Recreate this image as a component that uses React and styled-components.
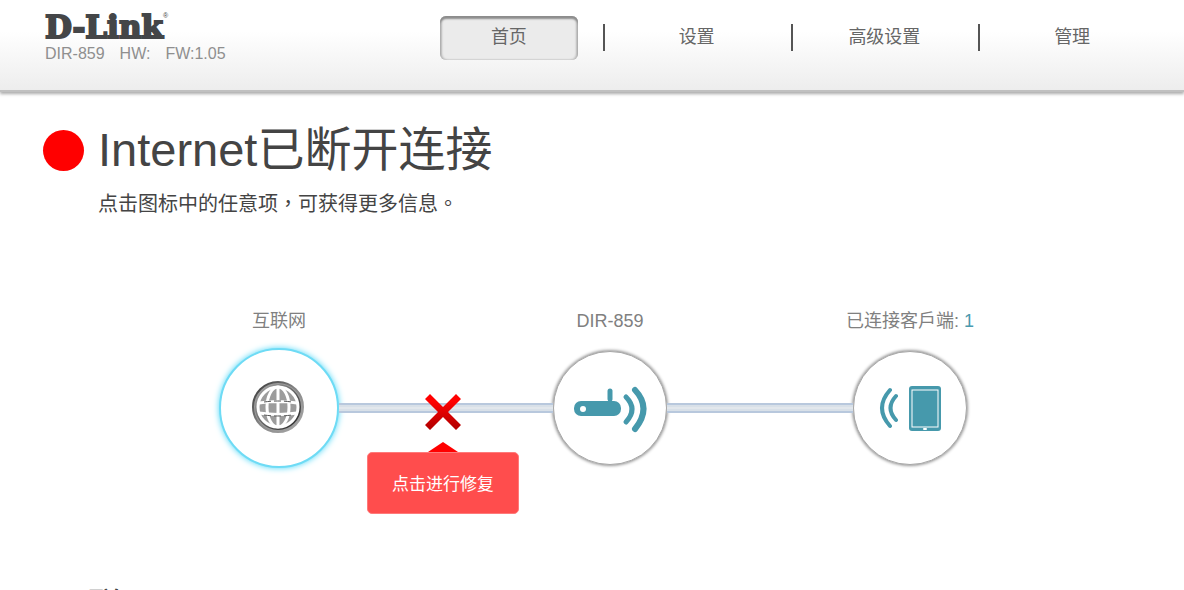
import React from "react";
import styled, { createGlobalStyle } from "styled-components";

const Global = createGlobalStyle`
  * { box-sizing: border-box; }
  body {
    margin: 0;
    background: #fff;
    color: #444;
    font-family: "Liberation Sans", "Noto Sans CJK TC", sans-serif;
    overflow-x: hidden;
  }
  h1, h2, p { margin: 0; font-weight: 400; }
  button { font: inherit; cursor: pointer; }
`;

const Header = styled.header`
  display: flex;
  justify-content: space-between;
  align-items: flex-start;
  height: 92px;
  padding: 0 18px 0 45px;
  background: linear-gradient(#fff 35%, #ededed);
  border-bottom: 2px solid #c0c0c0;
  box-shadow: 0 2px 3px #aaa;
`;

const Brand = styled.div`
  padding-top: 9px;
`;

const Logo = styled.a`
  display: flex;
  align-items: flex-start;
  height: 36px;
  color: #444648;
  font: bold 31px/36px "DejaVu Serif", serif;
  text-decoration: none;
  -webkit-text-stroke: 2px #444648;

  sup {
    font: 7px/14px "Liberation Sans", sans-serif;
    -webkit-text-stroke: 0;
  }
`;

const Info = styled.div`
  display: flex;
  gap: 15px;
  color: #8f8f8f;
  font-size: 16px;
  line-height: 18px;
`;

const Nav = styled.nav`
  display: grid;
  grid-template-columns: repeat(4, 1fr);
  flex: 0 0 751px;
  padding-top: 16px;
`;

const NavCell = styled.div`
  display: flex;
  justify-content: center;
  background: ${(p) => (p.$divided ? "linear-gradient(#555, #555) left 8px / 2px 27px no-repeat" : "none")};
`;

const NavLink = styled.a`
  width: 138px;
  height: 44px;
  border-radius: 6px;
  color: #666;
  font-size: 18px;
  line-height: 42px;
  text-align: center;
  text-decoration: none;
  background: ${(p) => (p.$active ? "#ebebeb" : "none")};
  box-shadow: ${(p) =>
    p.$active ? "inset 0 3px 2px #8c8c8c, inset 2px 0 2px #bbb, inset -2px 0 2px #bbb" : "none"};
`;

const Main = styled.main`
  padding: 28px 41px 0 43px;
`;

const Status = styled.div`
  display: grid;
  grid-template-columns: 41px 1fr;
  column-gap: 14px;
  align-items: center;
`;

const Dot = styled.span`
  width: 41px;
  height: 41px;
  border-radius: 50%;
  background: #f00;
`;

const Title = styled.h1`
  font-size: 47px;
  line-height: 60px;
`;

const Hint = styled.p`
  grid-column: 2;
  padding-top: 10px;
  font-size: 20px;
  line-height: 28px;
`;

const Diagram = styled.section`
  display: grid;
  grid-template-columns: 120px 214fr 114px 186fr 114px;
  grid-template-rows: 26px 120px;
  row-gap: 14px;
  align-items: center;
  width: 748px;
  max-width: 100%;
  margin: 90px auto 0;
`;

const Label = styled.div`
  grid-row: 1;
  grid-column: ${(p) => p.$column};
  justify-self: center;
  color: #808080;
  font-size: 18px;
  line-height: 26px;
  white-space: nowrap;

  a {
    color: #4a9aae;
    text-decoration: none;
  }
`;

const Node = styled.button`
  grid-row: 2;
  grid-column: ${(p) => p.$column};
  justify-self: center;
  display: flex;
  justify-content: center;
  align-items: center;
  width: ${(p) => (p.$selected ? 120 : 114)}px;
  aspect-ratio: 1;
  padding: 0;
  border: ${(p) => (p.$selected ? "2px solid #6edbf5" : "1px solid #a8a8a8")};
  border-radius: 50%;
  background: #fff;
  box-shadow: 0 0 ${(p) => (p.$selected ? "6px #4dd7f7" : "3px 1px #999")};
`;

const Link = styled.div`
  grid-row: 2;
  grid-column: ${(p) => p.$column};
  position: relative;
  height: 10px;
  background: linear-gradient(#b8c8dd 2px, #d8e0e8 2px 4px, #e2e7ec 4px 6px, #d8e0e8 6px 8px, #b8c8dd 8px);
`;

const Fault = styled.div`
  position: absolute;
  top: -9px;
  left: 0;
  right: 6px;
  display: flex;
  flex-direction: column;
  align-items: center;
`;

const CrossButton = styled.button`
  display: flex;
  padding: 0;
  border: 0;
  background: none;
`;

const Pointer = styled.svg`
  margin-top: 12px;
`;

const FixButton = styled.button`
  width: 152px;
  height: 62px;
  padding: 0 0 2px;
  border: 1px solid #ff7a7a;
  border-radius: 5px;
  background: #ff4d4d;
  color: #fff;
  font-size: 17px;
`;

const Section = styled.h2`
  padding: 112px 0 0 11px;
  font-size: 34px;
  line-height: 50px;
`;

const Globe = () => (
  <svg width="54" height="54" viewBox="0 0 54 54" fill="none" aria-hidden="true">
    <defs>
      <linearGradient id="ring" x1="0" y1="0" x2="1" y2="1">
        <stop offset="0" stopColor="#333" />
        <stop offset="0.5" stopColor="#888" />
        <stop offset="1" stopColor="#aaa" />
      </linearGradient>
      <linearGradient id="inner" x1="0" y1="0" x2="1" y2="1">
        <stop offset="0" stopColor="#aaa" />
        <stop offset="1" stopColor="#222" />
      </linearGradient>
    </defs>
    <circle cx="26" cy="26" r="25" fill="#9c9c9c" stroke="url(#ring)" strokeWidth="2" />
    <circle cx="26" cy="26" r="22" stroke="url(#inner)" strokeWidth="2" />
    <g stroke="#fff" strokeWidth="3">
      <circle cx="26" cy="26" r="20" />
      <ellipse cx="26" cy="26" rx="11" ry="20" />
      <path d="M26 6v40M7 22q19-3 38 0M7 32q19 3 38 0" />
    </g>
    <path d="M12 21q14-2 28 0M12 34q14 2 28 0" stroke="#555" strokeWidth="1" strokeDasharray="7 3" />
  </svg>
);

const Router = () => (
  <svg width="76" height="50" viewBox="0 0 76 50" fill="none" stroke="#4699ac" strokeLinecap="round" aria-hidden="true">
    <path d="M38 8v8" strokeWidth="5" />
    <rect x="2" y="18" width="47" height="15" rx="7" fill="#4699ac" stroke="none" />
    <circle cx="11" cy="26" r="3" fill="#fff" stroke="none" />
    <path d="M54 14q12 12 0 25" strokeWidth="5" />
    <path d="M63 7q17 18 0 39" strokeWidth="6" />
  </svg>
);

const Clients = () => (
  <svg width="64" height="48" viewBox="0 0 64 48" fill="none" stroke="#4699ac" strokeLinecap="round" aria-hidden="true">
    <path d="M12 6Q-4 24 12 42M18 12Q7 24 18 36" strokeWidth="4" />
    <rect x="31" y="2" width="32" height="45" rx="3" fill="#4699ac" stroke="none" />
    <rect x="34" y="6" width="26" height="37" stroke="#fff" strokeWidth="1" />
    <path d="M46 45h2" stroke="#fff" strokeWidth="2" />
  </svg>
);

const Cross = () => (
  <svg width="36" height="36" viewBox="0 0 36 36" aria-hidden="true">
    <defs>
      <linearGradient id="cross" x1="0" y1="0" x2="0" y2="1">
        <stop offset="0.2" stopColor="#f00" />
        <stop offset="0.9" stopColor="#b80000" />
      </linearGradient>
    </defs>
    <path fill="url(#cross)" d="M5 0 18 13 31 0 36 5 23 18 36 31 31 36 18 23 5 36 0 31 13 18 0 5Z" />
  </svg>
);

const tabs = ["首页", "设置", "高级设置", "管理"];

export default function App() {
  return (
    <>
      <Global />
      <Header>
        <Brand>
          <Logo href="#">D-Link<sup>®</sup></Logo>
          <Info><span>DIR-859</span><span>HW:</span><span>FW:1.05</span></Info>
        </Brand>
        <Nav>
          {tabs.map((tab, i) => (
            <NavCell key={tab} $divided={i > 0}>
              <NavLink href="#" $active={i === 0}>{tab}</NavLink>
            </NavCell>
          ))}
        </Nav>
      </Header>
      <Main>
        <Status>
          <Dot />
          <Title>Internet已断开连接</Title>
          <Hint>点击图标中的任意项，可获得更多信息。</Hint>
        </Status>
        <Diagram>
          <Label $column={1}>互联网</Label>
          <Label $column={3}>DIR-859</Label>
          <Label $column={5}>已连接客戶端: <a href="#">1</a></Label>
          <Node $column={1} $selected aria-label="互联网"><Globe /></Node>
          <Link $column={2}>
            <Fault>
              <CrossButton aria-label="点击进行修复"><Cross /></CrossButton>
              <Pointer width="30" height="10" viewBox="0 0 30 10" aria-hidden="true">
                <path d="M0 10 15 0 30 10Z" fill="#f00" />
              </Pointer>
              <FixButton>点击进行修复</FixButton>
            </Fault>
          </Link>
          <Node $column={3} aria-label="DIR-859"><Router /></Node>
          <Link $column={4} />
          <Node $column={5} aria-label="已连接客戶端"><Clients /></Node>
        </Diagram>
        <Section>互联网</Section>
      </Main>
    </>
  );
}
